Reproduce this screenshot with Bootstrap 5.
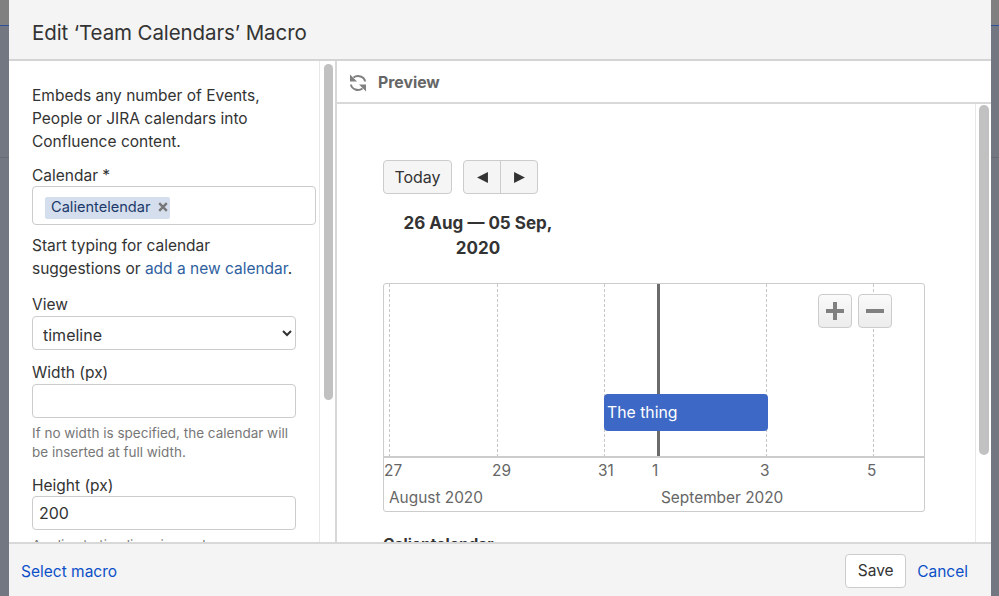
<!DOCTYPE html>
<html lang="en">
<head>
<meta charset="utf-8">
<title>Edit Team Calendars Macro</title>
<link rel="stylesheet" href="https://cdn.jsdelivr.net/npm/bootstrap@5.3.0/dist/css/bootstrap.min.css">
<style>
html,body{height:596px;overflow:hidden;margin:0}
body{background:#737781;font-family:Inter,"Liberation Sans",sans-serif;color:#333;font-size:15.5px;position:relative}
.shade-top{position:absolute;left:0;right:0;top:0;height:26px;background:#808080;border-bottom:1px solid #2d4f9e}
.shade-line{position:absolute;left:0;right:0;top:157px;height:1px;background:#666a73}
.dlg{position:relative;margin:0 8px 0 9px;height:596px;background:#fff}
.dlg-head{height:61px;background:#f4f4f4;border-bottom:2px solid #d4d4d4;padding:0 23px;font-size:20.5px;color:#333;letter-spacing:-.1px;line-height:65px}
.dlg-main{height:481px;overflow:hidden}
.side{width:328px;border-right:2px solid #d8d8d8;height:100%;flex:none}
.side-body{width:310px;padding:23px 0 0 23px;overflow:hidden;flex:none}
.track{width:17px;border-left:1px solid #e8e8e8;flex:none;padding:3px 0 0 4px}
.thumb{width:9px;background:#c1c1c1;border-radius:5px}
.thumb-a{height:336px}
.track-b{padding:1px 0 0 3px;width:16px}
.thumb-b{width:10px;height:350px}
.intro{line-height:23px;margin:0 0 11px;width:260px}
.fld-label{line-height:23px;margin:0;display:block}
.fld{height:34px;width:264px;border:1px solid #ccc;border-radius:4px;background:#fff;padding:0 6px;font-size:16px;color:#333;display:block;box-shadow:none}
.tagbox{width:284px;height:39px;border:1px solid #ccc;border-radius:4px;padding:8px 0 0 12px;margin:-1px 0 9px}
.chip{display:inline-flex;align-items:center;height:22px;background:#d5deec;color:#1b3a6b;border-radius:2px;padding:0 0 1px 6px;font-size:14.6px;width:125px}
.chip svg{margin:-2px 0 0 8px}
.hint{line-height:23px;width:270px;margin:0 0 13px}
.hint a{color:#2f5f9f;text-decoration:none}
.small-hint{font-size:13.5px;line-height:19px;color:#777;margin:6px 0 12px;width:264px}
.sel{appearance:auto;padding:3px 0 0 6px}
.gap-above{margin-top:11px}
.input-tight{margin-top:-1px}
.pv{min-width:0;height:100%}
.pv-bar{height:43px;border-bottom:2px solid #d8d8d8;padding:2px 0 0 12px;color:#666;font-weight:700;font-size:15.8px;gap:11px;flex:none}
.pv-scroll{min-height:0;overflow:hidden}
.pv-body{width:638px;padding:56px 0 0 46px;overflow:hidden;flex:none}
.tbtn{background:#f5f5f5;border:1px solid #ccc;border-radius:4px;height:34px;color:#333;font-size:16px;padding:0;display:flex;align-items:center;justify-content:center}
.tbtn-today{width:69px;margin-right:11px}
.navg{width:75px;border:1px solid #ccc;border-radius:4px;background:#f5f5f5;height:34px}
.navg span{flex:1;display:flex;align-items:center;justify-content:center;height:100%}
.navg span+span{border-left:1px solid #ccc}
.range{width:190px;text-align:center;font-weight:700;font-size:17px;line-height:25px;margin:17px 0 22px;color:#333}
.tl{position:relative;width:542px;height:229px;border:1px solid #ccc;border-radius:3px;background:#fff}
.gl{position:absolute;top:0;height:173px;width:0;border-left:1px dashed #c8c8c8}
.today{position:absolute;left:273px;top:0;width:3px;height:173px;background:#6b6b6b}
.axis{position:absolute;left:0;right:0;top:172px;height:2px;background:#ccc}
.evt{position:absolute;left:220px;top:110px;width:164px;height:37px;background:#3d68c5;border-radius:4px;color:#fff;line-height:37px;padding-left:3px;font-size:15.8px}
.tick,.mon{position:absolute;color:#666;line-height:20px;font-size:15.4px}
.tick{top:177px}
.mon{top:204px}
.zb{position:absolute;top:10px;width:34px;height:34px;background:linear-gradient(#fafafa,#ececec);border:1px solid #ccc;border-radius:4px;display:flex;align-items:center;justify-content:center}
.cal-title{font-weight:700;margin:23px 0 0;line-height:20px}
.dlg-foot{height:54px;background:#f4f4f4;border-top:2px solid #d8d8d8;padding:2px 23px 0 12px}
.dlg-foot a{color:#0c50c8;text-decoration:none;font-size:15.5px;margin-top:2px}
.save{width:61px;height:34px;background:#fff;border:1px solid #ccc;border-radius:4px;font-size:15.5px;color:#333;padding:0;margin-right:11px;--bs-btn-hover-bg:#fff}
</style>
</head>
<body>
<div class="shade-top"></div>
<div class="shade-line"></div>
<div class="dlg d-flex flex-column">
  <div class="dlg-head">Edit ‘Team Calendars’ Macro</div>
  <div class="dlg-main d-flex">
    <div class="side d-flex">
      <div class="side-body">
        <p class="intro">Embeds any number of Events, People or JIRA calendars into Confluence content.</p>
        <label class="fld-label">Calendar *</label>
        <div class="tagbox"><span class="chip">Calientelendar<svg width="10" height="10" viewBox="0 0 10 10"><path d="M1.2 1.2l7.6 7.6M8.8 1.2L1.2 8.8" stroke="#777" stroke-width="2.4"/></svg></span></div>
        <p class="hint">Start typing for calendar suggestions or <a href="#">add a new calendar</a>.</p>
        <label class="fld-label">View</label>
        <select class="fld sel"><option>timeline</option></select>
        <label class="fld-label gap-above">Width (px)</label>
        <input class="fld" type="text">
        <p class="small-hint">If no width is specified, the calendar will be inserted at full width.</p>
        <label class="fld-label">Height (px)</label>
        <input class="fld input-tight" type="text" value="200">
        <p class="small-hint">Applies to timeline view only.</p>
      </div>
      <div class="track"><div class="thumb thumb-a"></div></div>
    </div>
    <div class="pv flex-grow-1 d-flex flex-column">
      <div class="pv-bar d-flex align-items-center">
        <svg width="18" height="18" viewBox="0 0 18 18" fill="none" stroke="#808080" stroke-width="2"><path d="M16 7.5A7 6 0 0 0 4.5 3.5"/><path d="M2 10.5A7 6 0 0 0 13.5 14.5"/><path d="M1 .5v7h7z" fill="#808080" stroke="none"/><path d="M17 17.5v-7h-7z" fill="#808080" stroke="none"/></svg>
        <span>Preview</span>
      </div>
      <div class="pv-scroll flex-grow-1 d-flex">
        <div class="pv-body">
          <div class="d-flex">
            <button class="tbtn tbtn-today" type="button">Today</button>
            <div class="navg d-flex">
              <span><svg width="13" height="13" viewBox="0 0 12 12"><path d="M11 1v10L1 6z" fill="#333"/></svg></span>
              <span><svg width="13" height="13" viewBox="0 0 12 12"><path d="M1 1v10l10-5z" fill="#333"/></svg></span>
            </div>
          </div>
          <div class="range">26 Aug — 05 Sep, 2020</div>
          <div class="tl">
            <div class="gl" style="left:5px"></div>
            <div class="gl" style="left:113px"></div>
            <div class="gl" style="left:220px"></div>
            <div class="gl" style="left:382px"></div>
            <div class="gl" style="left:489px"></div>
            <div class="today"></div>
            <div class="axis"></div>
            <div class="evt">The thing</div>
            <div class="zb" style="left:434px"><svg width="20" height="20" viewBox="0 0 20 20"><path d="M8 1h4v7h7v4h-7v7H8v-7H1V8h7z" fill="#808080"/></svg></div>
            <div class="zb" style="left:474px"><svg width="20" height="20" viewBox="0 0 20 20"><path d="M1 8h18v4H1z" fill="#808080"/></svg></div>
            <span class="tick" style="left:0">27</span>
            <span class="tick" style="left:108px">29</span>
            <span class="tick" style="left:214px">31</span>
            <span class="tick" style="left:268px">1</span>
            <span class="tick" style="left:376px">3</span>
            <span class="tick" style="left:483px">5</span>
            <span class="mon" style="left:5px">August 2020</span>
            <span class="mon" style="left:277px">September 2020</span>
          </div>
          <p class="cal-title">Calientelendar</p>
        </div>
        <div class="track track-b"><div class="thumb thumb-b"></div></div>
      </div>
    </div>
  </div>
  <div class="dlg-foot d-flex align-items-center justify-content-between">
    <a href="#">Select macro</a>
    <div class="d-flex align-items-center">
      <button class="btn save" type="button">Save</button>
      <a href="#">Cancel</a>
    </div>
  </div>
</div>
</body>
</html>
